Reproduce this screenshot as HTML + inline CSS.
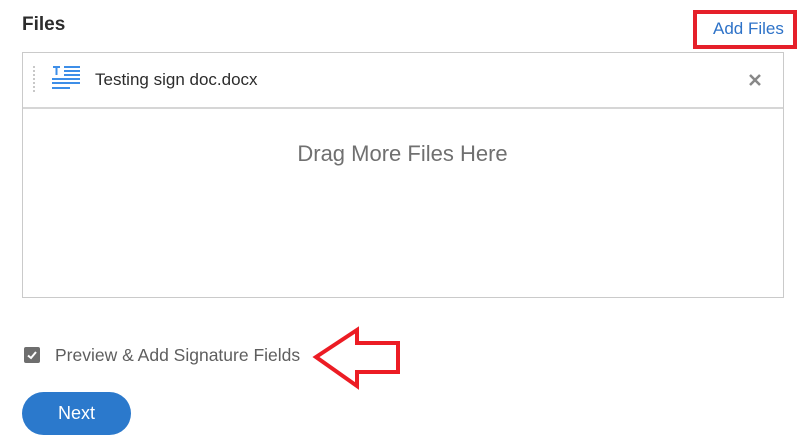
<!DOCTYPE html>
<html><head><style>
body{margin:0;width:800px;height:446px;background:#fff;font-family:"Liberation Sans",sans-serif;position:relative;overflow:hidden}
.a{position:absolute}
</style></head><body>
<div class="a" style="left:22px;top:14px;font-size:19px;font-weight:bold;color:#2c2c2c">Files</div>
<div class="a" style="left:693px;top:10px;width:96px;height:31px;border:4px solid #e5202a"></div>
<div class="a" style="left:713px;top:19px;font-size:17px;color:#2d72c8">Add Files</div>
<div class="a" style="left:22px;top:52px;width:760px;height:244px;border:1px solid #cacaca"></div>
<div class="a" style="left:23px;top:107px;width:760px;height:2px;background:#d6d6d6"></div>
<div class="a" style="left:33px;top:66px;width:0;height:26px;border-left:2px dotted #c8c8c8"></div>
<svg class="a" style="left:50px;top:64px" width="32" height="28" viewBox="0 0 32 28">
<g stroke="#3d8ee8" stroke-width="2" fill="none">
<path d="M3 3h7M6.5 3v8M14 3h16M14 7h16M14 11h16M2 15h28M2 19h28M2 24h18"/></g></svg>
<div class="a" style="left:95px;top:70px;font-size:17px;color:#2c2c2c">Testing sign doc.docx</div>
<svg class="a" style="left:748px;top:73px" width="14" height="14"><path d="M2 2L12 12M12 2L2 12" stroke="#888" stroke-width="2.5"/></svg>
<div class="a" style="left:0;width:805px;top:141px;text-align:center;font-size:22px;color:#707070">Drag More Files Here</div>
<div class="a" style="left:24px;top:347px;width:16px;height:16px;background:#6e6e6e;border-radius:2px"></div>
<svg class="a" style="left:24px;top:347px" width="16" height="16"><path d="M4 8.5L7 11L12 5" stroke="#fff" stroke-width="2" fill="none"/></svg>
<div class="a" style="left:55px;top:345px;font-size:17.5px;color:#5e5e5e">Preview &amp; Add Signature Fields</div>
<svg class="a" style="left:0;top:0" width="800" height="446"><path d="M316 357L357 330V343H398V372H357V386Z" fill="none" stroke="#ec1c24" stroke-width="4" stroke-linejoin="miter"/></svg>
<div class="a" style="left:22px;top:392px;width:109px;height:43px;border-radius:22px;background:#2b79cc;color:#fff;font-size:18px;text-align:center;line-height:43px">Next</div>
</body></html>
